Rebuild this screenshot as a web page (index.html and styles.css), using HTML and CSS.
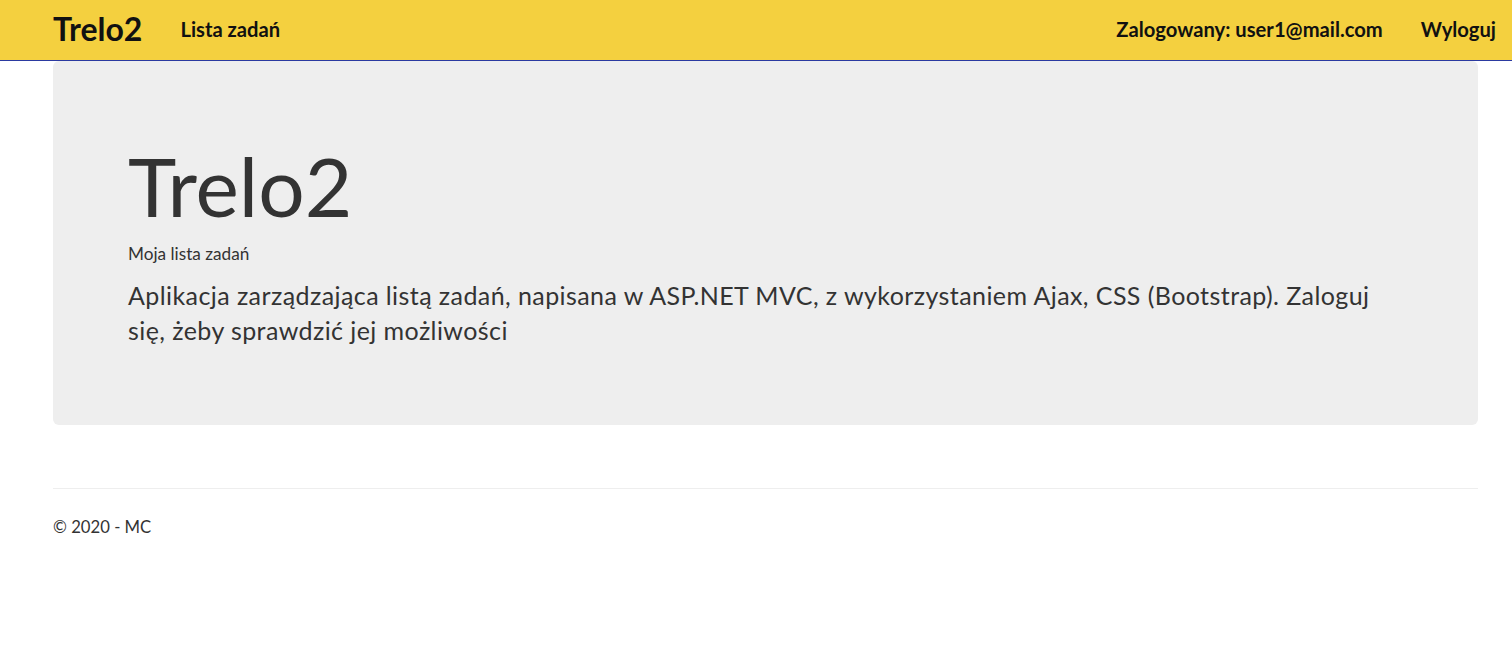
FILE: index.html
```html
<!DOCTYPE html>
<html lang="pl">
<head>
<meta charset="utf-8">
<title>Trelo2</title>
<link rel="stylesheet" href="styles.css">
</head>
<body>
<nav class="navbar">
  <div class="container nav-inner">
    <div class="nav-left">
      <a class="brand" href="#">Trelo2</a>
      <a class="nav-link" href="#">Lista zadań</a>
    </div>
    <div class="nav-right">
      <span class="nav-link">Zalogowany: user1@mail.com</span>
      <a class="nav-link" href="#">Wyloguj</a>
    </div>
  </div>
</nav>
<div class="container body-content">
  <div class="jumbotron">
    <h1 class="hero-title">Trelo2</h1>
    <div class="hero-sub">Moja lista zadań</div>
    <p class="hero-lead">Aplikacja zarządzająca listą zadań, napisana w ASP.NET MVC, z wykorzystaniem Ajax, CSS (Bootstrap). Zaloguj się, żeby sprawdzić jej możliwości</p>
  </div>
  <hr class="footer-rule">
  <footer class="footer">
    <p>© 2020 - MC</p>
  </footer>
</div>
</body>
</html>
```

FILE: styles.css
```css
* { box-sizing: border-box; }
html, body { margin: 0; padding: 0; }
body {
  font-family: Lato, "Open Sans", sans-serif;
  font-size: 16px;
  color: #333;
  background: #fff;
}
a { text-decoration: none; color: inherit; }

.container {
  margin-left: 38px;
  margin-right: 19px;
  padding: 0 15px;
}

.navbar {
  background: #f4d03f;
  border-bottom: 1px solid #2b3aa0;
  height: 61px;
}
.nav-inner {
  display: flex;
  justify-content: space-between;
  align-items: center;
  height: 60px;
  padding-bottom: 3px;
}
.nav-left, .nav-right {
  display: flex;
  align-items: center;
}
.brand {
  font-size: 32px;
  font-weight: 700;
  color: #111;
  margin-right: 38px;
}
.nav-link {
  font-size: 20.2px;
  font-weight: 700;
  color: #111;
}
.nav-right { margin-right: -18px; }
.nav-right .nav-link { margin-left: 38px; }

.jumbotron {
  background: #eee;
  border-radius: 6px;
  padding: 48px 75px 48px;
  min-height: 364px;
}
.hero-title {
  font-size: 82px;
  font-weight: 400;
  line-height: 1.1;
  margin: 0;
  padding-top: 31px;
  color: #333;
}
.hero-sub {
  font-size: 17.2px;
  margin-top: 13px;
}
.hero-lead {
  font-size: 25px;
  letter-spacing: 0.42px;
  line-height: 35px;
  margin: 14px 0 0;
}

.footer-rule {
  border: 0;
  border-top: 1px solid #eee;
  margin: 63px 0 28px;
}
.footer p {
  margin: 0;
  font-size: 16.7px;
}
```
